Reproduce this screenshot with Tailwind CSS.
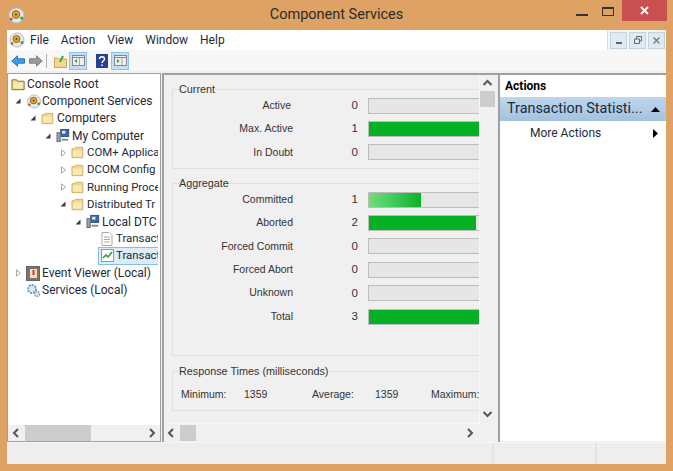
<!DOCTYPE html>
<html lang="en">
<head>
  <meta charset="UTF-8" />
  <title>Component Services</title>
  <script src="https://cdn.jsdelivr.net/npm/@tailwindcss/browser@4"></script>
</head>
<body class="w-[673px] h-[471px] overflow-hidden bg-[#dfa265] font-['Roboto',sans-serif] text-[12px] text-[#1e2a38]">
  <svg class="hidden">
    <symbol id="folder" viewBox="0 0 16 16"><path d="M.5 13.500V4h2.500l1-1.500h8v11z" fill="#f2d88f" stroke="#cfae63"/><path d="M1.500 6h9.500v6.500H1.500z" fill="#f9e9b4"/></symbol>
    <symbol id="root" viewBox="0 0 16 16"><path d="M.5 13.500V3h5l1 1.500h7v9z" fill="#f0e08c" stroke="#6f6a3c"/><path d="M2 6h10v6H2z" fill="#f7edb4"/></symbol>
    <symbol id="comp" viewBox="0 0 16 16"><rect x="4.500" y="1.500" width="8.500" height="7.500" fill="#2f6cb8" stroke="#3c4f6c"/><rect x="6" y="3" width="3.500" height="3" fill="#e3edf9"/><rect x=".5" y="5" width="3.500" height="9.500" fill="#9aa3ad" stroke="#5f6a75"/><path d="M5.500 11.500h7v2h-7z" fill="#7e8a96"/></symbol>
    <symbol id="svc" viewBox="0 0 16 16"><circle cx="8" cy="8" r="7" fill="#e6e8ec" stroke="#b8bdc5"/><circle cx="7.500" cy="7" r="3.500" fill="#e2a62c" stroke="#8b6a1e"/><circle cx="7.500" cy="7" r="1" fill="#5a431a"/><circle cx="13" cy="10.500" r="1.500" fill="#3fa34d"/><circle cx="3" cy="11.500" r="1.300" fill="#c2503f"/></symbol>
    <symbol id="open" viewBox="0 0 15 8"><path d="M9.500 1.500v5h-5z" fill="#3c3c3c"/></symbol>
    <symbol id="closed" viewBox="0 0 15 8"><path d="M5.500 .8l4 3.200-4 3.200z" fill="#fff" stroke="#a6a6a6"/></symbol>
  </svg>

  <div class="flex flex-col h-full">
    <!-- title bar -->
    <header class="relative flex items-center justify-center h-[30px] shrink-0 text-[14.500px] text-[#2b2b2b]">
      <svg class="absolute left-[8px] top-[7px] w-[17px] h-[17px]"><use href="#svc" /></svg>
      <span>Component Services</span>
      <div class="absolute right-[6px] top-0 flex items-start">
        <div class="w-[12px] h-[2px] mt-[14px] mr-[14px] bg-[#333]"></div>
        <div class="w-[12px] h-[9px] mt-[7px] mr-[8px] border border-t-2 border-[#333]"></div>
        <div class="flex items-center justify-center w-[45px] h-[21px] bg-[#c75050]">
          <svg class="w-[9px] h-[9px]" viewBox="0 0 9 9"><path d="M1 1l7 7M8 1l-7 7" stroke="#fff" stroke-width="2"/></svg>
        </div>
      </div>
    </header>

    <div class="flex flex-col flex-1 mx-[7px] mb-[7px] bg-[#f0f0f0] min-h-0">
      <!-- menu bar -->
      <div class="flex items-center h-[20px] shrink-0 bg-[#f5f5f5]">
        <div class="flex items-center flex-1 h-full bg-white border-r border-[#dcdcdc]">
          <svg class="w-[16px] h-[16px] ml-[2px] mr-[5px]"><use href="#svc" /></svg>
          <div class="flex gap-[12px]">
            <span>File</span><span>Action</span><span>View</span><span>Window</span><span>Help</span>
          </div>
        </div>
        <div class="flex gap-[2px] ml-[2px] mr-[1px]">
          <div class="flex items-end justify-center pb-[4px] w-[17px] h-[17px] bg-[#dcebf5] border border-[#c3d4e0]"><div class="w-[6px] h-[2px] bg-[#666]"></div></div>
          <div class="flex items-center justify-center w-[17px] h-[17px] bg-[#dcebf5] border border-[#c3d4e0]">
            <svg class="w-[8px] h-[8px]" viewBox="0 0 8 8"><path d="M.5 3h5v4.500h-5zM2.500 3V.5h5v4.500h-2" fill="none" stroke="#666"/></svg>
          </div>
          <div class="flex items-center justify-center w-[17px] h-[17px] bg-[#dcebf5] border border-[#c3d4e0]">
            <svg class="w-[7px] h-[7px]" viewBox="0 0 7 7"><path d="M.5.5l6 6M6.500.5l-6 6" stroke="#777" stroke-width="1.300"/></svg>
          </div>
        </div>
      </div>

      <!-- toolbar -->
      <div class="flex items-center h-[21px] shrink-0 pl-[4px] bg-[#f7f7f7]">
        <svg class="w-[14px] h-[12px] shrink-0" viewBox="0 0 14 12"><path d="M.8 6L6.500.8v3H13.500v4.400H6.500v3z" fill="#3d9be9" stroke="#2a78c2"/></svg>
        <svg class="w-[14px] h-[12px] ml-[4px] shrink-0" viewBox="0 0 14 12"><path d="M13.200 6L7.500.8v3H.5v4.400h7v3z" fill="#9a9a9a" stroke="#808080"/></svg>
        <div class="w-px h-[14px] ml-[3px] bg-[#b0b0b0]"></div>
        <svg class="w-[13px] h-[14px] ml-[7px] shrink-0" viewBox="0 0 13 14"><path d="M.5 13.500V4h3l1 1h8v8.500z" fill="#f2d88f" stroke="#c9a75a"/><path d="M6 8l3-6" stroke="#3fa34d" stroke-width="2"/></svg>
        <div class="flex items-center justify-center w-[18px] h-[18px] ml-[2px] bg-[#c4dff5] border border-[#8fc3ee]">
          <svg class="w-[13px] h-[11px]" viewBox="0 0 13 11"><rect x=".5" y=".5" width="12" height="10" fill="#eee" stroke="#888"/><path d="M.5 2.500h12" stroke="#888"/><path d="M5 4v4L2.500 6z" fill="#2d9a3f"/><path d="M7.500 3v7" stroke="#aaa"/></svg>
        </div>
        <svg class="w-[12px] h-[14px] ml-[9px] shrink-0" viewBox="0 0 12 14"><rect width="12" height="14" fill="#27408f"/><path d="M3.500 5c0-3 5-3 5 0 0 2-2.500 2-2.500 4M6 10.500V12" stroke="#fff" stroke-width="1.500" fill="none"/></svg>
        <div class="flex items-center justify-center w-[18px] h-[18px] ml-[3px] bg-[#c4dff5] border border-[#8fc3ee]">
          <svg class="w-[13px] h-[11px]" viewBox="0 0 13 11"><rect x=".5" y=".5" width="12" height="10" fill="#eee" stroke="#888"/><path d="M.5 2.500h12" stroke="#888"/><path d="M3 4v4L5.500 6z" fill="#2d9a3f"/><path d="M8 3v7" stroke="#aaa"/></svg>
        </div>
      </div>

      <!-- panes -->
      <div class="flex h-[371px] shrink-0 pt-[2px] gap-[1px]">
        <!-- tree -->
        <div class="flex flex-col w-[154px] shrink-0 border border-[#a0a0a0] bg-white overflow-hidden">
          <div class="flex-1 min-h-0 mr-[2px] pt-[1.500px] whitespace-nowrap overflow-hidden">
            <div class="flex items-center h-[17.200px] pl-[3px]"><svg class="w-[16px] h-[15px] shrink-0"><use href="#root" /></svg><span>Console Root</span></div>
            <div class="flex items-center h-[17.200px] pl-[3px]"><svg class="w-[15px] h-[8px] shrink-0"><use href="#open" /></svg><svg class="w-[16px] h-[15px] shrink-0"><use href="#svc" /></svg><span>Component Services</span></div>
            <div class="flex items-center h-[17.200px] pl-[18px]"><svg class="w-[15px] h-[8px] shrink-0"><use href="#open" /></svg><svg class="w-[16px] h-[15px] shrink-0"><use href="#folder" /></svg><span>Computers</span></div>
            <div class="flex items-center h-[17.200px] pl-[33px]"><svg class="w-[15px] h-[8px] shrink-0"><use href="#open" /></svg><svg class="w-[16px] h-[15px] shrink-0"><use href="#comp" /></svg><span>My Computer</span></div>
            <div class="flex items-center h-[17.200px] pl-[48px]"><svg class="w-[15px] h-[8px] shrink-0"><use href="#closed" /></svg><svg class="w-[16px] h-[15px] shrink-0"><use href="#folder" /></svg><span class="text-[11.400px]">COM+ Applica</span></div>
            <div class="flex items-center h-[17.200px] pl-[48px]"><svg class="w-[15px] h-[8px] shrink-0"><use href="#closed" /></svg><svg class="w-[16px] h-[15px] shrink-0"><use href="#folder" /></svg><span class="text-[11.400px]">DCOM Config</span></div>
            <div class="flex items-center h-[17.200px] pl-[48px]"><svg class="w-[15px] h-[8px] shrink-0"><use href="#closed" /></svg><svg class="w-[16px] h-[15px] shrink-0"><use href="#folder" /></svg><span class="text-[11.400px]">Running Proce</span></div>
            <div class="flex items-center h-[17.200px] pl-[48px]"><svg class="w-[15px] h-[8px] shrink-0"><use href="#open" /></svg><svg class="w-[16px] h-[15px] shrink-0"><use href="#folder" /></svg><span class="text-[11.400px]">Distributed Tr</span></div>
            <div class="flex items-center h-[17.200px] pl-[63px]"><svg class="w-[15px] h-[8px] shrink-0"><use href="#open" /></svg><svg class="w-[16px] h-[15px] shrink-0"><use href="#comp" /></svg><span>Local DTC</span></div>
            <div class="flex items-center h-[17.200px] pl-[93px]"><svg class="w-[12px] h-[14px] mr-[3px] shrink-0" viewBox="0 0 12 14"><path d="M1 .5h7l3 3v10H1z" fill="#fff" stroke="#a9a9a9"/><path d="M3 5h6M3 7.500h6M3 10h6" stroke="#a9a9a9"/></svg><span class="text-[11.400px]">Transact</span></div>
            <div class="flex items-center h-[17.200px] ml-[90px] pl-[2px] bg-[#dcedf9] border border-r-0 border-[#7fc1ea]"><svg class="w-[13px] h-[13px] mr-[2px] shrink-0" viewBox="0 0 13 13"><rect x=".5" y=".5" width="12" height="12" fill="#fff" stroke="#8a9aa8"/><path d="M2 9l3-3 2 2 4-5" fill="none" stroke="#2d9a3f" stroke-width="1.500"/></svg><span class="text-[11.400px]">Transact</span></div>
            <div class="flex items-center h-[17.200px] pl-[3px]"><svg class="w-[15px] h-[8px] shrink-0"><use href="#closed" /></svg><svg class="w-[14px] h-[15px] mr-[2px] shrink-0" viewBox="0 0 14 15"><rect x=".5" y=".5" width="13" height="14" fill="#8c6f58" stroke="#5c6878"/><rect x="4" y="3" width="7" height="9" fill="#f0e0c8"/><path d="M7.500 4v5" stroke="#cc3b2c" stroke-width="2"/></svg><span>Event Viewer (Local)</span></div>
            <div class="flex items-center h-[17.200px] pl-[18px]"><svg class="w-[15px] h-[15px] mr-[1px] shrink-0" viewBox="0 0 15 15"><circle cx="6" cy="6" r="4" fill="#dbe7f2" stroke="#7c99b8" stroke-width="2" stroke-dasharray="2 1"/><circle cx="11" cy="11" r="2.500" fill="#dbe7f2" stroke="#7c99b8" stroke-width="1.500" stroke-dasharray="1.500 1"/></svg><span>Services (Local)</span></div>
          </div>
          <!-- tree h scrollbar -->
          <div class="flex items-center h-[16px] shrink-0 bg-[#f0f0f0]">
            <svg class="w-[17px] h-[16px] shrink-0" viewBox="0 0 17 16"><path d="M10 4L6 8l4 4" fill="none" stroke="#555" stroke-width="2"/></svg>
            <div class="w-[66px] h-[16px] bg-[#cdcdcd]"></div>
            <svg class="w-[17px] h-[16px] ml-auto shrink-0" viewBox="0 0 17 16"><path d="M7 4l4 4-4 4" fill="none" stroke="#555" stroke-width="2"/></svg>
          </div>
        </div>

        <!-- result pane -->
        <div class="flex flex-col w-[338px] shrink-0 border-2 border-b-0 border-[#a0a0a0] bg-[#f0f0f0] font-['Liberation_Sans',sans-serif] text-[10.500px] text-[#333]">
          <div class="flex h-[349px] shrink-0">
            <div class="w-[316px] shrink-0 overflow-hidden pl-[8px] pt-[8px] border-r border-b border-[#f8f8f8]">
              <div class="w-[330px]">
                <fieldset class="h-[86px] border border-[#e0e0e0]">
                  <legend class="ml-[6px] text-[10.800px] leading-[12px]">Current</legend>
                  <div class="flex items-center h-[23.400px] -mt-[1px]"><span class="w-[118px] text-right">Active</span><span class="w-[67px] text-right text-[11.500px]">0</span><div class="w-[140px] h-[16px] ml-[10px] bg-[#e6e6e6] border border-[#bcbcbc]"></div></div>
                  <div class="flex items-center h-[23.400px]"><span class="w-[120px] text-right">Max. Active</span><span class="w-[65px] text-right text-[11.500px]">1</span><div class="w-[140px] h-[16px] ml-[10px] bg-[#06b025] border border-[#bcbcbc]"></div></div>
                  <div class="flex items-center h-[23.400px]"><span class="w-[120px] text-right">In Doubt</span><span class="w-[65px] text-right text-[11.500px]">0</span><div class="w-[140px] h-[16px] ml-[10px] bg-[#e6e6e6] border border-[#bcbcbc]"></div></div>
                </fieldset>
                <fieldset class="h-[179px] mt-[8px] border border-[#e0e0e0]">
                  <legend class="ml-[6px] text-[10.800px] leading-[12px]">Aggregate</legend>
                  <div class="flex items-center h-[23.400px] -mt-[1px]"><span class="w-[120px] text-right">Committed</span><span class="w-[65px] text-right text-[11.500px]">1</span><div class="w-[140px] h-[16px] ml-[10px] bg-[#e6e6e6] border border-[#bcbcbc]"><div class="w-[52px] h-full bg-gradient-to-r from-[#6fdc7a] via-[#3cc95a] to-[#06b025]"></div></div></div>
                  <div class="flex items-center h-[23.400px]"><span class="w-[120px] text-right">Aborted</span><span class="w-[65px] text-right text-[11.500px]">2</span><div class="w-[140px] h-[16px] ml-[10px] bg-[#e6e6e6] border border-[#bcbcbc]"><div class="w-[107px] h-full bg-[#06b025]"></div></div></div>
                  <div class="flex items-center h-[23.400px]"><span class="w-[120px] text-right">Forced Commit</span><span class="w-[65px] text-right text-[11.500px]">0</span><div class="w-[140px] h-[16px] ml-[10px] bg-[#e6e6e6] border border-[#bcbcbc]"></div></div>
                  <div class="flex items-center h-[23.400px]"><span class="w-[120px] text-right">Forced Abort</span><span class="w-[65px] text-right text-[11.500px]">0</span><div class="w-[140px] h-[16px] ml-[10px] bg-[#e6e6e6] border border-[#bcbcbc]"></div></div>
                  <div class="flex items-center h-[23.400px]"><span class="w-[120px] text-right">Unknown</span><span class="w-[65px] text-right text-[11.500px]">0</span><div class="w-[140px] h-[16px] ml-[10px] bg-[#e6e6e6] border border-[#bcbcbc]"></div></div>
                  <div class="flex items-center h-[23.400px]"><span class="w-[120px] text-right">Total</span><span class="w-[65px] text-right text-[11.500px]">3</span><div class="w-[140px] h-[16px] ml-[10px] bg-[#06b025] border border-[#bcbcbc]"></div></div>
                </fieldset>
                <fieldset class="h-[46px] mt-[9px] border border-[#e0e0e0]">
                  <legend class="ml-[6px] text-[10.800px] leading-[12px]">Response Times (milliseconds)</legend>
                  <div class="flex items-center h-[14px] mt-[11px] pl-[8px] whitespace-nowrap">
                    <span class="w-[63px]">Minimum:</span><span class="w-[68px]">1359</span><span class="w-[63px]">Average:</span><span class="w-[56px]">1359</span><span>Maximum:</span>
                  </div>
                </fieldset>
              </div>
            </div>
            <!-- vertical scrollbar -->
            <div class="flex flex-col items-start flex-1 bg-[#f0f0f0]">
              <svg class="w-[15px] h-[16px] shrink-0" viewBox="0 0 15 16"><path d="M3.500 10l4-4 4 4" fill="none" stroke="#555" stroke-width="2"/></svg>
              <div class="w-[15px] h-[16px] bg-[#cdcdcd]"></div>
              <svg class="w-[15px] h-[16px] mt-auto mb-[2px] shrink-0" viewBox="0 0 15 16"><path d="M3.500 6l4 4 4-4" fill="none" stroke="#555" stroke-width="2"/></svg>
            </div>
          </div>
          <!-- horizontal scrollbar -->
          <div class="flex items-center h-[16px] mt-[1px] shrink-0">
            <svg class="w-[16px] h-[16px] shrink-0" viewBox="0 0 16 16"><path d="M9 4L5 8l4 4" fill="none" stroke="#555" stroke-width="2"/></svg>
            <div class="w-[16px] h-[16px] bg-[#cdcdcd]"></div>
            <svg class="w-[16px] h-[16px] ml-[266px] shrink-0" viewBox="0 0 16 16"><path d="M6 4l4 4-4 4" fill="none" stroke="#555" stroke-width="2"/></svg>
          </div>
        </div>

        <!-- actions pane -->
        <div class="flex flex-col flex-1 -ml-[1px] bg-white border-t-2 border-[#a0a0a0] mb-[1px]">
          <div class="flex items-center h-[22px] pl-[5px] font-bold text-black">Actions</div>
          <div class="flex items-center justify-between h-[24px] pl-[7px] pr-[6px] bg-gradient-to-b from-[#bdd6ec] to-[#a3c2e0] text-[14.400px] text-[#1b2a3a]">
            <span>Transaction Statisti...</span>
            <svg class="w-[9px] h-[5px]" viewBox="0 0 9 5"><path d="M4.500 0L9 5H0z" fill="#000"/></svg>
          </div>
          <div class="flex items-center justify-between h-[24px] pl-[30px] pr-[8px]">
            <span>More Actions</span>
            <svg class="w-[5px] h-[9px]" viewBox="0 0 5 9"><path d="M0 0l5 4.500L0 9z" fill="#000"/></svg>
          </div>
        </div>
      </div>

      <!-- status bar -->
      <div class="flex flex-1 min-h-0 bg-[#eeeeee] border-t border-[#f6f6f6]">
        <div class="w-[487px] border-r-2 border-[#e4e4e4]"></div>
        <div class="w-[103px] border-r-2 border-[#e4e4e4]"></div>
      </div>
    </div>
  </div>
</body>
</html>
